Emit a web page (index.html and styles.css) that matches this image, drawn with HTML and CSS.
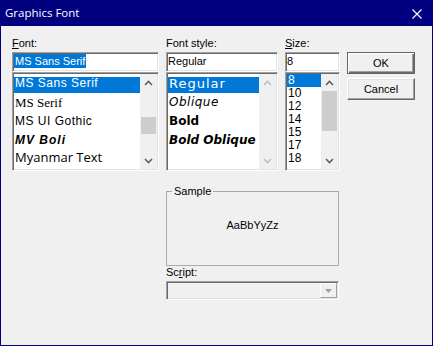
FILE: index.html
```html
<!DOCTYPE html>
<html lang="en">
<head>
    <meta charset="UTF-8">
    <meta name="viewport" content="width=device-width, initial-scale=1.0">
    <title>Graphics Font</title>
    <link rel="stylesheet" href="styles.css">
</head>
<body>
    <div class="window">
        <div class="titlebar">
            <span class="title">Graphics Font</span>
            <svg class="close" width="10" height="10" viewBox="0 0 10 10">
                <path d="M0.5 0.5 L9.5 9.5 M9.5 0.5 L0.5 9.5" stroke="#fff" stroke-width="1.1" fill="none"/>
            </svg>
        </div>

        <div class="dialog-body">
            <!-- Font name -->
            <div class="field">
                <div class="lbl"><u>F</u>ont:</div>
                <div class="edit"><span class="hl">MS Sans Serif</span></div>
                <div class="listbox">
                    <ul class="items items-tall">
                        <li class="sel first f-mssans">MS Sans Serif</li>
                        <li class="f-msserif">MS Serif</li>
                        <li class="f-gothic">MS UI Gothic</li>
                        <li class="f-boli">MV Boli</li>
                        <li class="f-myanmar">Myanmar Text</li>
                    </ul>
                    <div class="vscroll">
                        <div class="sb-btn"><svg width="9" height="6" viewBox="0 0 9 6"><polyline points="1,5 4.5,1.5 8,5" fill="none" stroke="currentColor" stroke-width="1.6"/></svg></div>
                        <div class="sb-track"><div class="sb-thumb thumb-font"></div></div>
                        <div class="sb-btn"><svg width="9" height="6" viewBox="0 0 9 6"><polyline points="1,1 4.5,4.5 8,1" fill="none" stroke="currentColor" stroke-width="1.6"/></svg></div>
                    </div>
                </div>
            </div>

            <!-- Font style -->
            <div class="field">
                <div class="lbl">Font style:</div>
                <div class="edit">Regular</div>
                <div class="listbox">
                    <ul class="items items-tall">
                        <li class="sel first s-regular">Regular</li>
                        <li class="s-oblique">Oblique</li>
                        <li class="s-bold">Bold</li>
                        <li class="s-boldoblique">Bold Oblique</li>
                    </ul>
                    <div class="vscroll disabled">
                        <div class="sb-btn"><svg width="9" height="6" viewBox="0 0 9 6"><polyline points="1,5 4.5,1.5 8,5" fill="none" stroke="currentColor" stroke-width="1.6"/></svg></div>
                        <div class="sb-track"></div>
                        <div class="sb-btn"><svg width="9" height="6" viewBox="0 0 9 6"><polyline points="1,1 4.5,4.5 8,1" fill="none" stroke="currentColor" stroke-width="1.6"/></svg></div>
                    </div>
                </div>
            </div>

            <!-- Size -->
            <div class="field">
                <div class="lbl"><u>S</u>ize:</div>
                <div class="edit">8</div>
                <div class="listbox">
                    <ul class="items items-size">
                        <li class="sel">8</li>
                        <li>10</li>
                        <li>12</li>
                        <li>14</li>
                        <li>15</li>
                        <li>17</li>
                        <li>18</li>
                    </ul>
                    <div class="vscroll">
                        <div class="sb-btn"><svg width="9" height="6" viewBox="0 0 9 6"><polyline points="1,5 4.5,1.5 8,5" fill="none" stroke="currentColor" stroke-width="1.6"/></svg></div>
                        <div class="sb-track"><div class="sb-thumb thumb-size"></div></div>
                        <div class="sb-btn"><svg width="9" height="6" viewBox="0 0 9 6"><polyline points="1,1 4.5,4.5 8,1" fill="none" stroke="currentColor" stroke-width="1.6"/></svg></div>
                    </div>
                </div>
            </div>

            <!-- Buttons -->
            <div class="buttons">
                <button class="btn btn-default">OK</button>
                <button class="btn">Cancel</button>
            </div>

            <fieldset class="sample">
                <legend>Sample</legend>
                <div class="sample-text">AaBbYyZz</div>
            </fieldset>

            <div class="script">
                <div class="lbl">Sc<u>r</u>ipt:</div>
                <div class="combo">
                    <div class="combo-btn">
                        <svg width="7" height="4" viewBox="0 0 7 4"><polygon points="0,0 7,0 3.5,4" fill="#a0a0a0"/></svg>
                    </div>
                </div>
            </div>
        </div>
    </div>
</body>
</html>
```

FILE: styles.css
```css
* {
    box-sizing: border-box;
}

html, body {
    margin: 0;
    padding: 0;
}

body {
    width: 433px;
    height: 346px;
    overflow: hidden;
    font-family: "Liberation Sans", Arial, sans-serif;
    font-size: 11px;
    color: #000;
    background: #f0f0f0;
}

.window {
    width: 433px;
    height: 346px;
    border: 1px solid #000080;
    background: #f0f0f0;
}

.titlebar {
    height: 25px;
    background: #000080;
    color: #fff;
    display: flex;
    align-items: center;
    justify-content: space-between;
    padding: 0 10px 2px 4px;
    font-family: "Open Sans", sans-serif;
    font-size: 11.5px;
}

.close {
    margin-top: 2px;
}

.dialog-body {
    display: grid;
    grid-template-columns: 147px 112px 55px 68px;
    column-gap: 7px;
    padding: 11px 0 0 11px;
    align-items: start;
}

.field {
    display: flex;
    flex-direction: column;
}

.lbl {
    height: 15px;
    line-height: 13px;
    white-space: nowrap;
}

/* sunken 3d edges shared by edit, list and combo */
.edit,
.listbox,
.combo {
    border: 1px solid;
    border-color: #a0a0a0 #fff #fff #a0a0a0;
    box-shadow: inset 1px 1px 0 #696969, inset -1px -1px 0 #e3e3e3;
    padding: 1px;
}

.edit {
    height: 20px;
    background: #fff;
    line-height: 14px;
    white-space: nowrap;
    overflow: hidden;
}

.hl {
    display: inline-block;
    background: #0078d7;
    color: #fff;
    padding: 0 1px;
    line-height: 14px;
}

.listbox {
    height: 99px;
    background: #fff;
    display: flex;
}

.items {
    flex: 1;
    list-style: none;
    margin: 0;
    padding: 0;
    overflow: hidden;
    white-space: nowrap;
}

.items li {
    padding-left: 1px;
}

.items .sel {
    background: #0078d7;
    color: #fff;
}

.items-tall {
    padding-top: 3px;
}

.items-tall li {
    height: 19px;
    line-height: 19px;
}

.items-tall li.first {
    height: 16px;
    line-height: 13px;
}

.items-size li {
    height: 13px;
    line-height: 13px;
    font-size: 12px;
}

/* font list entries drawn in their own face */
.f-mssans {
    font-size: 12px;
    letter-spacing: 0.5px;
}

.f-msserif {
    font-family: "Liberation Serif", serif;
    font-size: 13px;
}

.f-gothic {
    font-size: 12px;
    letter-spacing: 0.5px;
}

.f-boli {
    font-size: 12px;
    font-style: italic;
    font-weight: bold;
    letter-spacing: 1px;
}

.items-tall li.f-myanmar {
    font-family: "Open Sans", sans-serif;
    font-size: 13px;
    line-height: 14px;
}

.s-regular,
.s-oblique,
.s-bold,
.s-boldoblique {
    font-family: "DejaVu Sans", sans-serif;
    font-size: 12px;
}

.items-tall li.s-regular {
    font-size: 13px;
    letter-spacing: 1px;
}

.s-oblique {
    font-style: italic;
    font-weight: 200;
    letter-spacing: 0.5px;
}

.s-bold {
    font-weight: bold;
}

.s-boldoblique {
    font-weight: bold;
    font-style: italic;
}

.vscroll {
    width: 17px;
    background: #f0f0f0;
    display: flex;
    flex-direction: column;
    color: #606060;
}

.vscroll.disabled {
    color: #c0c0c0;
}

.sb-btn {
    height: 17px;
    display: flex;
    align-items: center;
    justify-content: center;
}

.sb-btn svg {
    display: block;
}

.sb-track {
    flex: 1;
}

.sb-thumb {
    background: #cdcdcd;
    margin: 0 1px;
}

.thumb-font {
    margin-top: 26px;
    height: 17px;
}

.thumb-size {
    height: 40px;
}

.buttons {
    display: flex;
    flex-direction: column;
    gap: 4px;
    padding-top: 15px;
}

.btn {
    height: 22px;
    width: 100%;
    padding: 0;
    font: inherit;
    color: #000;
    background: #f0f0f0;
    border: 1px solid;
    border-color: #fff #696969 #696969 #fff;
    box-shadow: inset -1px -1px 0 #a0a0a0, inset 1px 1px 0 #e3e3e3;
}

.btn-default {
    border-color: #646464;
    box-shadow: inset 1px 1px 0 #fff, inset -1px -1px 0 #696969, inset -2px -2px 0 #a0a0a0;
}

.sample {
    grid-column: 2 / 4;
    margin: 14px 1px 0 0;
    padding: 0;
    min-width: 0;
    border: 1px solid #a9a9a9;
}

.sample legend {
    margin-left: 5px;
    padding: 0 2px;
    line-height: 13px;
}

.sample-text {
    height: 67px;
    padding-top: 20px;
    line-height: 14px;
    text-align: center;
}

.script {
    grid-column: 2 / 4;
    margin-right: 1px;
}

.combo {
    height: 19px;
    background: #f0f0f0;
    display: flex;
    justify-content: flex-end;
}

.combo-btn {
    width: 17px;
    height: 100%;
    border: 1px solid;
    border-color: #fff #a0a0a0 #a0a0a0 #fff;
    display: flex;
    align-items: center;
    justify-content: center;
}

.combo-btn svg {
    display: block;
}
```
